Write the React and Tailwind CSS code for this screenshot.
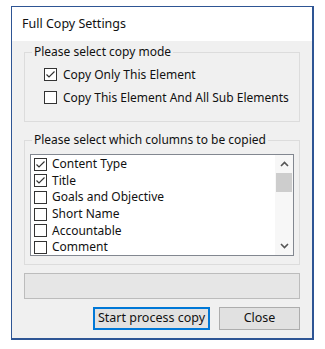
import React from 'react';

const Check = ({ checked }) => (
  <span className="w-[13px] h-[13px] border border-[#333333] bg-white flex items-center justify-center shrink-0">
    {checked && (
      <svg width="11" height="11" viewBox="0 0 11 11">
        <path d="M1.5 5.5 L4 8 L9.5 2.5" fill="none" stroke="#333" strokeWidth="1.2" />
      </svg>
    )}
  </span>
);

const columns = [
  { label: 'Content Type', checked: true },
  { label: 'Title', checked: true },
  { label: 'Goals and Objective', checked: false },
  { label: 'Short Name', checked: false },
  { label: 'Accountable', checked: false },
  { label: 'Comment', checked: false },
];

const App = () => {
  return (
    <div className="w-[325px] h-[349px] bg-white pt-[6px] pl-[11px] font-['Noto_Sans',sans-serif] text-[12px] text-[#111]">
      <div className="w-[303px] h-[334px] bg-[#f0f0f0] border-l border-t border-r-2 border-b-2 border-[#2e5594] flex flex-col">
        <div className="h-[34px] bg-white pl-[10px] flex items-center text-[12.5px]">
          Full Copy Settings
        </div>

        <div className="px-[12px] flex flex-col">
          <fieldset className="mt-[4px] h-[77px] border border-[#dcdcdc] pl-[19px] pt-[9px] flex flex-col gap-[10px]">
            <legend className="-ml-[12px] px-[2px] leading-[14px]">Please select copy mode</legend>
            <label className="flex items-center gap-[6px] h-[13px]">
              <Check checked />
              <span>Copy Only This Element</span>
            </label>
            <label className="flex items-center gap-[6px] h-[13px]">
              <Check />
              <span>Copy This Element And All Sub Elements</span>
            </label>
          </fieldset>

          <fieldset className="mt-[11px] h-[132px] border border-[#dcdcdc] px-[5px] pt-[7px]">
            <legend className="ml-[2px] px-[2px] leading-[14px]">Please select which columns to be copied</legend>
            <div className="h-[102px] border border-[#828790] bg-white flex">
              <div className="flex-1 pt-[1px] pl-[3px]">
                {columns.map((c) => (
                  <div key={c.label} className="h-[16.6px] flex items-center gap-[5px]">
                    <Check checked={c.checked} />
                    <span>{c.label}</span>
                  </div>
                ))}
              </div>
              <div className="w-[18px] bg-[#f7f7f7] flex flex-col items-center">
                <div className="h-[18px] flex items-center justify-center">
                  <svg width="9" height="6" viewBox="0 0 9 6">
                    <path d="M1 5 L4.5 1.5 L8 5" fill="none" stroke="#555" strokeWidth="1.6" />
                  </svg>
                </div>
                <div className="w-[16px] h-[19px] bg-[#cdcdcd]" />
                <div className="flex-1" />
                <div className="h-[18px] flex items-center justify-center">
                  <svg width="9" height="6" viewBox="0 0 9 6">
                    <path d="M1 1 L4.5 4.5 L8 1" fill="none" stroke="#555" strokeWidth="1.6" />
                  </svg>
                </div>
              </div>
            </div>
          </fieldset>

          <div className="mt-[8px] h-[26px] bg-[#e6e6e6] border border-[#bcbcbc]" />

          <div className="mt-[8px] flex justify-end gap-[9px]">
            <button className="w-[117px] h-[23px] bg-[#e1e1e1] border-2 border-[#0078d7] text-[12.5px]">
              Start process copy
            </button>
            <button className="w-[81px] h-[23px] bg-[#e1e1e1] border border-[#adadad] text-[12.5px]">
              Close
            </button>
          </div>
        </div>
      </div>
    </div>
  );
};

export default App;
